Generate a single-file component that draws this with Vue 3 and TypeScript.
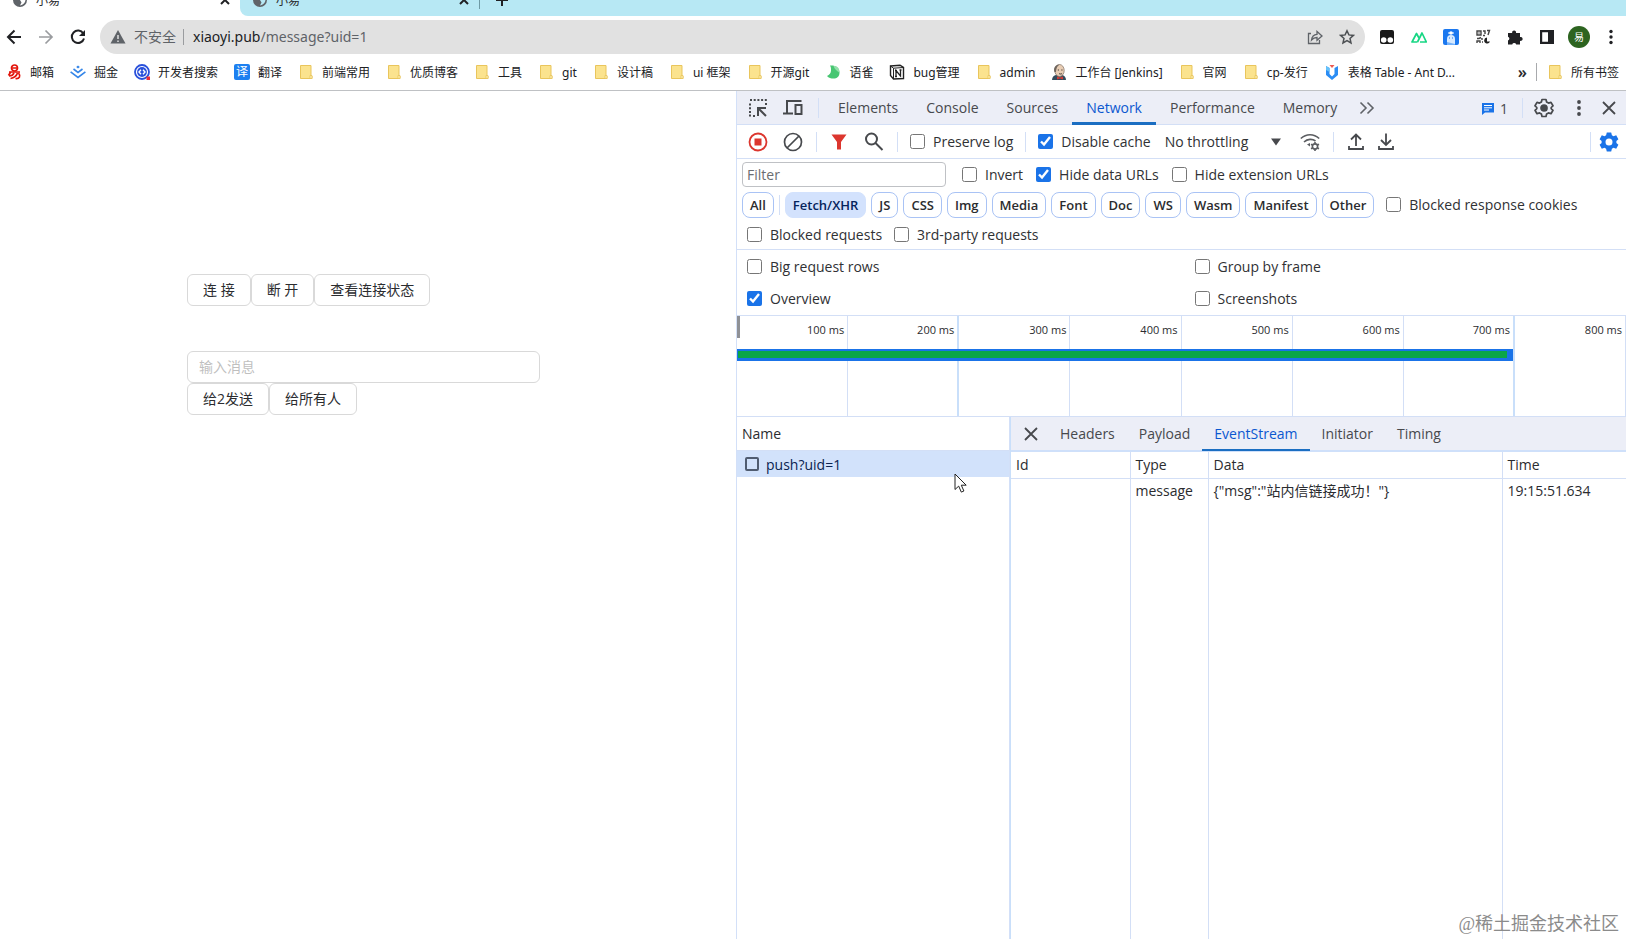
<script setup lang="ts">
import { ref } from 'vue'

interface Bookmark {
  label: string
  icon: string
}

const bookmarks: Bookmark[] = [
  { label: '邮箱', icon: 'netease' },
  { label: '掘金', icon: 'juejin' },
  { label: '开发者搜索', icon: 'search' },
  { label: '翻译', icon: 'translate' },
  { label: '前端常用', icon: 'folder' },
  { label: '优质博客', icon: 'folder' },
  { label: '工具', icon: 'folder' },
  { label: 'git', icon: 'folder' },
  { label: '设计稿', icon: 'folder' },
  { label: 'ui 框架', icon: 'folder' },
  { label: '开源git', icon: 'folder' },
  { label: '语雀', icon: 'yuque' },
  { label: 'bug管理', icon: 'notion' },
  { label: 'admin', icon: 'folder' },
  { label: '工作台 [Jenkins]', icon: 'jenkins' },
  { label: '官网', icon: 'folder' },
  { label: 'cp-发行', icon: 'folder' },
  { label: '表格 Table - Ant D...', icon: 'antd' },
]

const panels = ['Elements', 'Console', 'Sources', 'Network', 'Performance', 'Memory']
const activePanel = ref('Network')

const types = ['Fetch/XHR', 'JS', 'CSS', 'Img', 'Media', 'Font', 'Doc', 'WS', 'Wasm', 'Manifest', 'Other']
const activeType = ref('Fetch/XHR')

const ticks = [100, 200, 300, 400, 500, 600, 700, 800]

const detailTabs = ['Headers', 'Payload', 'EventStream', 'Initiator', 'Timing']
const activeDetail = ref('EventStream')

const preserveLog = ref(false)
const disableCache = ref(true)
const invert = ref(false)
const hideData = ref(true)
const hideExtension = ref(false)
const blockedCookies = ref(false)
const blockedRequests = ref(false)
const thirdParty = ref(false)
const bigRows = ref(false)
const groupByFrame = ref(false)
const overview = ref(true)
const screenshots = ref(false)
const filterText = ref('')
const message = ref('')
const throttling = ref('No throttling')
</script>

<template>
  <div class="browser">
    <div class="tabstrip">
      <div class="tab current">
        <svg class="globe" viewBox="0 0 16 16"><circle cx="8" cy="8" r="7" fill="#5f6368" /><path d="M8 2.500c3 0 5 2 5.500 5 0 3-2 5.500-5.500 6l1.500-3L8 8z" fill="#fff" /></svg>
        <span class="tab-title">小易</span>
        <button class="tab-close" aria-label="Close tab"><svg viewBox="0 0 10 10"><path d="M1 1l8 8M9 1l-8 8" /></svg></button>
      </div>
      <div class="tab">
        <svg class="globe" viewBox="0 0 16 16"><circle cx="8" cy="8" r="7" fill="#5f6368" /><path d="M8 2.500c3 0 5 2 5.500 5 0 3-2 5.500-5.500 6l1.500-3L8 8z" fill="#b7e8f4" /></svg>
        <span class="tab-title">小易</span>
        <button class="tab-close" aria-label="Close tab"><svg viewBox="0 0 10 10"><path d="M1 1l8 8M9 1l-8 8" /></svg></button>
      </div>
      <button class="new-tab" aria-label="New tab"><svg viewBox="0 0 12 12"><path d="M6 0v12M0 6h12" /></svg></button>
    </div>

    <div class="toolbar">
      <button class="nav" aria-label="Back"><svg viewBox="0 0 16 16" fill="none" stroke="#202124" stroke-width="2"><path d="M15 8H2M8.500 1.500L2 8l6.500 6.500" /></svg></button>
      <button class="nav" aria-label="Forward"><svg viewBox="0 0 16 16" fill="none" stroke="#9a9c9f" stroke-width="1.700"><path d="M1 8h13M7.500 1.500L14 8l-6.500 6.500" /></svg></button>
      <button class="nav" aria-label="Reload"><svg viewBox="0 0 16 16" fill="none" stroke="#202124" stroke-width="2"><path d="M13.300 4.500A6.200 6.200 0 1 0 14 9.500" /><path d="M15 1v6H9z" fill="#202124" stroke="none" /></svg></button>
      <div class="omnibox">
        <svg class="warn" viewBox="0 0 16 16"><path d="M8 1l7.500 13.500H.5z" fill="#5f6368" /><path d="M8 6v4M8 11.500v1.500" stroke="#e1e1e1" stroke-width="1.500" /></svg>
        <span class="insecure">不安全</span>
        <span class="omni-sep"></span>
        <span class="url">xiaoyi.pub<span class="path">/message?uid=1</span></span>
        <button class="omni-btn" aria-label="Share"><svg viewBox="0 0 16 16" fill="none" stroke="#5f6368" stroke-width="1.300"><path d="M4 4.500H1.500v10h11V11" /><path d="M4.500 11c.4-3.800 2.500-5.500 5.500-5.700V2.500l5 4.500-5 4.300V8.500c-2.500 0-4 .7-5.500 2.500z" /></svg></button>
        <button class="omni-btn" aria-label="Bookmark this tab"><svg viewBox="0 0 16 16" fill="none" stroke="#4d5053" stroke-width="1.500"><path d="M8 1.800l1.900 4.100 4.500.5-3.400 3 1 4.500L8 11.600l-4 2.300 1-4.500-3.400-3 4.500-.5z" /></svg></button>
      </div>
      <div class="extensions">
        <button class="ext" aria-label="Tampermonkey"><svg viewBox="0 0 16 16"><rect x="1" y="1" width="14" height="14" rx="2" fill="#191919" /><circle cx="4.700" cy="11" r="2.800" fill="#fff" /><circle cx="11.300" cy="11" r="2.800" fill="#fff" /></svg></button>
        <button class="ext" aria-label="Nuxt"><svg viewBox="0 0 16 16" fill="none" stroke="#17d684" stroke-width="1.700" stroke-linejoin="round"><path d="M6.500 13H1L5.500 4.500 8 9" /><path d="M6.500 13L11 4l4.300 9H9" /></svg></button>
        <button class="ext" aria-label="Assistant"><svg viewBox="0 0 16 16"><rect width="16" height="16" rx="2" fill="#1b78ef" /><path d="M4 16V10a4 4 0 0 1 8 0v6z" fill="#d7eaff" /><circle cx="8" cy="4" r="1.800" fill="#fff" /><path d="M5 4h6" stroke="#fff" /><path d="M4 13l8 2v1H4z" fill="#75b2fa" /><path d="M6 9h1M9 9h1" stroke="#1b78ef" /></svg></button>
        <button class="ext" aria-label="QR code"><svg viewBox="0 0 16 16" fill="none" stroke="#444" stroke-width="1.400"><path d="M2 2h4v4H2zM8 2h2v3M12 1.500h2.500L13 6M8 6.500h2M2 9.500h2l2-1M2 14v-2h3v2M7 9v2M7 13h1" /><path d="M12 8.500a3 3 0 1 0 3 4h-3z" fill="#222" stroke="none" /><path d="M3.500 4h1" /></svg></button>
        <button class="ext" aria-label="Extensions"><svg viewBox="0 0 16 16" fill="#202124"><path d="M1 4h4.200a2 2 0 1 1 3.800 0h4v4a2 2 0 1 1 0 3.800V15.500H9.200a2.100 2.100 0 0 0-4 0H1v-4a2 2 0 0 0 0-3.800z" /></svg></button>
        <button class="ext" aria-label="Side panel"><svg viewBox="0 0 16 16"><path d="M1 1h14v14H1zM3.200 3.200v9.600H9V3.200z" fill="#202124" fill-rule="evenodd" /></svg></button>
        <button class="avatar" aria-label="Profile">易</button>
        <button class="ext" aria-label="Menu"><svg viewBox="0 0 16 16" fill="#202124"><circle cx="8" cy="2.500" r="1.700" /><circle cx="8" cy="8" r="1.700" /><circle cx="8" cy="13.500" r="1.700" /></svg></button>
      </div>
    </div>

    <nav class="bookmarks">
      <a v-for="b in bookmarks" :key="b.label" href="#" class="bookmark">
        <svg v-if="b.icon === 'folder'" viewBox="0 0 16 16"><path d="M2.500 1.500h10.500v10.500h1v2.500H2.500z" fill="#fbe38e" stroke="#e9c55c" /><path d="M12 14.500v-3h2v3z" fill="#fff0b8" stroke="#e9c55c" stroke-width=".8" /></svg>
        <svg v-else-if="b.icon === 'netease'" viewBox="0 0 16 16" fill="none" stroke="#e3150b" stroke-width="1.700"><circle cx="8.500" cy="4" r="3" /><path d="M6 4h5M3 8h11M5 7.500l-2.500 4M8 9c-1 2.500-3 3-5 3M11.500 9c-1 3-4 5-7 5.500M12.500 9c2.500 3 1 6-3 5.500" /></svg>
        <svg v-else-if="b.icon === 'juejin'" viewBox="0 0 16 16" fill="none" stroke="#3586e8" stroke-width="1.600"><path d="M8 1.500l1.800 1.600L8 4.600 6.200 3.100z" fill="#3586e8" stroke="none" /><path d="M3.500 5L8 8.400 12.500 5M.6 7.800L8 13.500l7.400-5.700" /></svg>
        <svg v-else-if="b.icon === 'search'" viewBox="0 0 16 16"><circle cx="8" cy="8" r="7" fill="#fff" stroke="#2950db" stroke-width="1.800" /><circle cx="8" cy="8" r="4.900" fill="#2950db" /><path d="M7 5.700L5 8l2 2.300M9 5.700L11 8l-2 2.300" stroke="#fff" stroke-width="1.400" fill="none" /><rect x="12.500" y="12.500" width="3.500" height="3.500" fill="#ed2d36" /></svg>
        <span v-else-if="b.icon === 'translate'" class="yi">译</span>
        <svg v-else-if="b.icon === 'yuque'" viewBox="0 0 16 16"><path d="M5 1.500c5-.5 9.500 2 9.500 7 0 4-2.500 6-6 6-2.500 0-5-.5-6.500-2.500C4.500 11 6 9 6 6.500 6 4.500 6 3 5 1.500z" fill="#47c672" /><path d="M8.500 1.700c4 0 6.500 3 5.800 7-1.800-2-4.800-3-5.800-7z" fill="#93dfaa" /></svg>
        <svg v-else-if="b.icon === 'notion'" viewBox="0 0 16 16"><path d="M1.500 2L11 1.200 14.500 3.500v11l-10 .5-3-3.500z" fill="#fff" stroke="#222" stroke-width="1.400" /><path d="M1.500 2l3 2.200 10-.7M4.500 4.200V15" fill="none" stroke="#222" /><path d="M7 12.500v-6l4.500 5.500V6M6 6.500h2M10.500 6h2M6 12.500h2" fill="none" stroke="#222" stroke-width="1.300" /></svg>
        <svg v-else-if="b.icon === 'jenkins'" viewBox="0 0 16 16"><path d="M1 16c0-3 2-4.500 4-5h6c2 .5 4 2 4 5z" fill="#334b5c" /><ellipse cx="8.500" cy="6.500" rx="4.700" ry="6" fill="#e8cdb4" stroke="#8b7b70" stroke-width=".8" /><path d="M3.500 8C2 4 4.500.5 9 .5 6 2 5.500 4 5 8z" fill="#6f665f" /><path d="M6.800 6h1.200M10.300 6h1.200M8 9.500c1 .7 2 .7 3 0" stroke="#413632" fill="none" /><path d="M6 12.500l3 1 3-1v3l-3-1-3 1z" fill="#cf3b36" /></svg>
        <svg v-else viewBox="0 0 16 16"><path d="M2 2l3.500 2v6L8 12.500 10.500 10V4L14 2v9l-6 5-6-5z" fill="#2b8df4" /><path d="M2 2l3.500 2v4L2 6z" fill="#65c2fa" /><path d="M5.500 1h5L8 4z" fill="#ed5a52" /></svg>
        <span>{{ b.label }}</span>
      </a>
      <button class="more" aria-label="More bookmarks">»</button>
      <a href="#" class="bookmark all">
        <svg viewBox="0 0 16 16"><path d="M2.500 1.500h10.500v10.500h1v2.500H2.500z" fill="#fbe38e" stroke="#e9c55c" /><path d="M12 14.500v-3h2v3z" fill="#fff0b8" stroke="#e9c55c" stroke-width=".8" /></svg>
        <span>所有书签</span>
      </a>
    </nav>

    <div class="content">
      <main class="page">
        <div class="btn-row">
          <button class="btn">连 接</button><button class="btn">断 开</button><button class="btn">查看连接状态</button>
        </div>
        <input v-model="message" class="msg" type="text" placeholder="输入消息" aria-label="输入消息" />
        <div class="btn-row">
          <button class="btn">给2发送</button><button class="btn">给所有人</button>
        </div>
      </main>

      <section class="devtools">
        <div class="panel-bar">
          <button class="icon-btn" aria-label="Inspect"><svg viewBox="0 0 20 20" fill="none" stroke="#47494d" stroke-width="2"><path d="M2 2h17" stroke-dasharray="2 1.700" /><path d="M2 5.500V19M18 5v3" stroke-dasharray="2 1.700" /><path d="M5 18h3" stroke-dasharray="2 1.500" /><path d="M10 18V10h8M10.500 10.500L18 18" /></svg></button>
          <button class="icon-btn" aria-label="Device toolbar"><svg viewBox="0 0 20 20" fill="none" stroke="#47494d" stroke-width="2"><path d="M18.500 3H4v12M0 15.500h10" /><path d="M12.500 7h6v9h-6z" /></svg></button>
          <span class="sep"></span>
          <div class="panel-tabs" role="tablist">
            <button v-for="p in panels" :key="p" role="tab" class="panel-tab" :class="{ active: activePanel === p }" @click="activePanel = p">{{ p }}</button>
          </div>
          <button class="chev" aria-label="More tabs"><svg viewBox="0 0 16 16" fill="none" stroke="#5f6368" stroke-width="1.600"><path d="M1.500 2.500L7 8l-5.500 5.500M8.500 2.500L14 8l-5.500 5.500" /></svg></button>
          <button class="issues"><svg viewBox="0 0 14 14"><path d="M1 1h12v9.500H4L1 13z" fill="#1a73e8" /><path d="M3 3.500h8M3 5.800h8M3 8h5" stroke="#fff" /></svg><span>1</span></button>
          <span class="sep"></span>
          <button class="icon-btn" aria-label="Settings"><svg viewBox="0 0 20 20" fill="none" stroke="#47494d" stroke-width="1.700" stroke-linejoin="round"><path d="M8 1.500h4l.6 2.500 1.900 1.100L17 4.400l2 3.400L17.200 9.500v1.200L19 12.300l-2 3.400-2.500-.8-1.900 1.100-.6 2.500H8L7.400 16l-1.900-1.100-2.500.8-2-3.400 1.800-1.600V9.500L1 7.800l2-3.400 2.500.7L7.400 4z" /><circle cx="10" cy="10" r="3" fill="#47494d" /></svg></button>
          <button class="icon-btn dots" aria-label="More options"><svg viewBox="0 0 20 20" fill="#47494d"><circle cx="10" cy="4" r="1.900" /><circle cx="10" cy="10" r="1.900" /><circle cx="10" cy="16" r="1.900" /></svg></button>
          <button class="icon-btn close" aria-label="Close"><svg viewBox="0 0 20 20" fill="none" stroke="#47494d" stroke-width="1.800"><path d="M4 4l12 12M16 4L4 16" /></svg></button>
        </div>

        <div class="net-bar">
          <button class="icon-btn" aria-label="Record"><svg viewBox="0 0 20 20"><circle cx="10" cy="10" r="8.500" fill="none" stroke="#dc362e" stroke-width="1.800" /><rect x="6.500" y="6.500" width="7" height="7" fill="#dc362e" /></svg></button>
          <button class="icon-btn" aria-label="Clear"><svg viewBox="0 0 20 20" fill="none" stroke="#47494d" stroke-width="1.700"><circle cx="10" cy="10" r="8.500" /><path d="M16 4L4 16" /></svg></button>
          <span class="sep"></span>
          <button class="icon-btn" aria-label="Filter"><svg viewBox="0 0 20 20"><path d="M2.500 2.500h15L12 10v7.500H8V10z" fill="#dc362e" /></svg></button>
          <button class="icon-btn" aria-label="Search"><svg viewBox="0 0 20 20" fill="none" stroke="#47494d" stroke-width="2"><circle cx="7.500" cy="7" r="5.500" /><path d="M11.500 11l7 7" /></svg></button>
          <span class="sep"></span>
          <label class="check log"><input v-model="preserveLog" type="checkbox" />Preserve log</label>
          <span class="sep"></span>
          <label class="check cache"><input v-model="disableCache" type="checkbox" />Disable cache</label>
          <div class="throttle">
            <select v-model="throttling" aria-label="Throttling"><option>No throttling</option></select>
            <svg viewBox="0 0 10 8"><path d="M0 .5h10L5 7.500z" fill="#47494d" /></svg>
          </div>
          <button class="icon-btn" aria-label="Network conditions"><svg viewBox="0 0 20 20" fill="none" stroke="#5b5d61" stroke-width="1.600"><path d="M.8 6.500c5.500-5 13-5 18.400 0M4 10c3.500-3.300 8.500-3.300 11.500-1" /><path d="M7 12.500l3-1.500v3.500z" fill="#5b5d61" stroke="none" /><circle cx="15" cy="14.500" r="2.600" /><path d="M15 10v1.500M15 17.500V19M11 12.300l1.500.8M17.500 16l1.500.8M11 16.800l1.500-.8M17.500 13l1.500-.8" /></svg></button>
          <span class="sep"></span>
          <button class="icon-btn" aria-label="Import"><svg viewBox="0 0 20 20" fill="none" stroke="#47494d" stroke-width="1.800"><path d="M10 14V3M5 7.500L10 2.500l5 5M3 14v3h14v-3" /></svg></button>
          <button class="icon-btn" aria-label="Export"><svg viewBox="0 0 20 20" fill="none" stroke="#47494d" stroke-width="1.800"><path d="M10 1.500v11M5 8l5 5 5-5M3 14v3h14v-3" /></svg></button>
          <span class="sep last"></span>
          <button class="icon-btn gear" aria-label="Network settings"><svg viewBox="0 0 20 20"><path d="M7.800.5h4.400l.7 2.700 1.600 1 2.700-.9 2.200 3.900-2 1.900v1.800l2 1.900-2.200 3.900-2.700-.9-1.600 1-.7 2.700H7.800l-.7-2.700-1.600-1-2.700.9-2.200-3.900 2-1.900V9.100l-2-1.900 2.200-3.900 2.700.9 1.600-1zM10 6.500a3.500 3.500 0 1 0 0 7 3.500 3.500 0 0 0 0-7z" fill="#1a73e8" fill-rule="evenodd" /></svg></button>
        </div>

        <div class="filters">
          <div class="filter-row">
            <input v-model="filterText" class="filter" type="text" placeholder="Filter" aria-label="Filter" />
            <label class="check"><input v-model="invert" type="checkbox" />Invert</label>
            <label class="check"><input v-model="hideData" type="checkbox" />Hide data URLs</label>
            <label class="check"><input v-model="hideExtension" type="checkbox" />Hide extension URLs</label>
          </div>
          <div class="chip-row">
            <button class="chip" :class="{ active: activeType === 'All' }" @click="activeType = 'All'">All</button>
            <span class="chip-sep"></span>
            <button v-for="t in types" :key="t" class="chip" :class="{ active: activeType === t }" @click="activeType = t">{{ t }}</button>
            <label class="check cookies"><input v-model="blockedCookies" type="checkbox" />Blocked response cookies</label>
          </div>
          <div class="blocked-row">
            <label class="check"><input v-model="blockedRequests" type="checkbox" />Blocked requests</label>
            <label class="check"><input v-model="thirdParty" type="checkbox" />3rd-party requests</label>
          </div>
        </div>

        <div class="settings">
          <label class="check"><input v-model="bigRows" type="checkbox" />Big request rows</label>
          <label class="check"><input v-model="groupByFrame" type="checkbox" />Group by frame</label>
          <label class="check"><input v-model="overview" type="checkbox" />Overview</label>
          <label class="check"><input v-model="screenshots" type="checkbox" />Screenshots</label>
        </div>

        <div class="timeline">
          <div v-for="t in ticks" :key="t" class="tick" :class="{ strong: t === 200 || t === 700 }">{{ t }} ms</div>
          <span class="handle"></span>
          <span class="load"></span>
        </div>

        <div class="split">
          <div class="requests">
            <div class="name-head">Name</div>
            <button class="request"><span class="file"></span>push?uid=1</button>
            <svg class="cursor" viewBox="0 0 13 20"><path d="M1 1v15.500l3.700-3.400 2.600 6 2.600-1.100-2.600-5.800h4.900z" fill="#fff" stroke="#222" /></svg>
          </div>
          <div class="detail">
            <div class="detail-tabs" role="tablist">
              <button class="detail-close" aria-label="Close details"><svg viewBox="0 0 14 14" fill="none" stroke="#47494d" stroke-width="1.800"><path d="M1 1l12 12M13 1L1 13" /></svg></button>
              <button v-for="d in detailTabs" :key="d" role="tab" class="detail-tab" :class="{ active: activeDetail === d }" @click="activeDetail = d">{{ d }}</button>
            </div>
            <table class="events">
              <colgroup><col class="c-id" /><col class="c-type" /><col class="c-data" /><col class="c-time" /></colgroup>
              <thead>
                <tr><th>Id</th><th>Type</th><th>Data</th><th>Time</th></tr>
              </thead>
              <tbody>
                <tr><td></td><td>message</td><td>{"msg":"站内信链接成功！"}</td><td>19:15:51.634</td></tr>
                <tr class="filler"><td></td><td></td><td></td><td></td></tr>
              </tbody>
            </table>
          </div>
        </div>
      </section>
    </div>
    <div class="watermark">@稀土掘金技术社区</div>
  </div>
</template>

<style>
body {
  margin: 0;
}
</style>

<style scoped>
* {
  box-sizing: border-box;
}
.browser {
  position: relative;
  display: flex;
  flex-direction: column;
  height: 100vh;
  overflow: hidden;
  background: #fff;
  color: #2b2c2f;
  font-family: 'Open Sans', 'Noto Sans CJK SC', sans-serif;
  font-size: 14px;
}
button {
  margin: 0;
  padding: 0;
  border: 0;
  background: none;
  color: inherit;
  font: inherit;
}
svg {
  display: block;
  flex: none;
}
.tabstrip {
  display: flex;
  align-items: flex-end;
  flex: none;
  height: 16px;
  overflow: hidden;
  background: #fff;
}
.tab {
  display: flex;
  align-items: center;
  flex: none;
  width: 239px;
  height: 32px;
  padding: 0 10px 0 12px;
  background: #b7e8f4;
  font-size: 12px;
  border-bottom-left-radius: 8px;
}
.tab.current {
  width: 240px;
  background: #fff;
}
.globe {
  width: 16px;
  height: 16px;
}
.tab-title {
  flex: 1;
  margin-left: 8px;
}
.tab-close svg {
  width: 10px;
  height: 10px;
  stroke: #202124;
  stroke-width: 2;
}
.new-tab {
  display: flex;
  align-items: center;
  flex: 1;
  height: 32px;
  padding-left: 16px;
  background: #b7e8f4;
}
.new-tab::before {
  content: '';
  width: 1px;
  height: 18px;
  margin: 0 16px 0 -16px;
  background: #6e9aa5;
}
.new-tab svg {
  width: 12px;
  height: 12px;
  stroke: #202124;
  stroke-width: 2;
}
.toolbar {
  display: flex;
  align-items: center;
  flex: none;
  height: 42px;
  padding-left: 6px;
}
.nav {
  width: 16px;
  margin-right: 16px;
}
.nav:nth-child(3) {
  margin-right: 14px;
}
.nav svg,
.ext svg,
.omni-btn svg {
  width: 16px;
  height: 16px;
}
.omnibox {
  display: flex;
  align-items: center;
  flex: 1;
  height: 34px;
  padding: 0 10px;
  border-radius: 17px;
  background: #e1e1e1;
}
.warn {
  width: 16px;
  height: 16px;
}
.insecure {
  margin-left: 8px;
  padding-bottom: 2px;
  color: #5f6368;
}
.omni-sep {
  width: 1px;
  height: 16px;
  margin: 0 9px 0 7px;
  background: #9a9c9f;
}
.url {
  flex: 1;
  padding-bottom: 2px;
  color: #202124;
  font-family: 'Noto Sans', sans-serif;
}
.path {
  color: #5f6368;
}
.omni-btn {
  margin-left: 16px;
}
.extensions {
  display: flex;
  align-items: center;
  gap: 16px;
  padding: 0 7px 0 14px;
}
.avatar {
  width: 22px;
  height: 22px;
  margin: 0 -3px;
  border-radius: 50%;
  background: #2d6420;
  color: #fff;
  font-size: 10px;
  line-height: 22px;
}
.bookmarks {
  display: flex;
  align-items: center;
  gap: 16px;
  flex: none;
  height: 33px;
  padding: 0 7px 4px 6px;
  border-bottom: 1px solid #bfc1c4;
  font-family: 'Noto Sans', 'Noto Sans CJK SC', sans-serif;
  font-size: 12px;
  white-space: nowrap;
}
.bookmark {
  display: flex;
  align-items: center;
  gap: 8px;
  color: #202124;
  text-decoration: none;
}
.bookmark svg {
  width: 16px;
  height: 16px;
}
.yi {
  width: 16px;
  height: 16px;
  border-radius: 2px;
  background: #1d80f0;
  color: #fff;
  line-height: 15px;
  text-align: center;
}
.more {
  margin-left: auto;
  font-size: 16px;
  font-weight: 600;
}
.all {
  margin-left: -7px;
  padding-left: 10px;
  border-left: 1px solid #a8aaad;
}
.content {
  display: grid;
  grid-template-columns: 736fr 890fr;
  flex: 1;
  min-height: 0;
}
.page {
  min-width: 0;
  padding: 183px 0 0 187px;
}
.btn-row {
  display: flex;
}
.btn {
  height: 32px;
  padding: 0 15px 2px;
  border: 1px solid #d9d9d9;
  border-radius: 6px;
  background: #fff;
}
.msg {
  display: block;
  width: 353px;
  max-width: 100%;
  height: 32px;
  margin-top: 45px;
  padding: 0 11px 2px;
  border: 1px solid #d9d9d9;
  border-radius: 6px;
  font: inherit;
}
.msg::placeholder {
  color: #bfbfbf;
}
.devtools {
  display: flex;
  flex-direction: column;
  min-width: 0;
  border-left: 1px solid #d3e0f8;
  white-space: nowrap;
}
.panel-bar,
.net-bar {
  display: flex;
  align-items: center;
  flex: none;
  height: 34px;
  padding: 0 7px 0 11px;
  border-bottom: 1px solid #d3dff6;
}
.panel-bar {
  background: #eceef7;
  color: #47494d;
}
.icon-btn {
  flex: none;
  width: 20px;
  margin-right: 15px;
}
.icon-btn svg {
  width: 20px;
  height: 20px;
}
.sep {
  flex: none;
  width: 1px;
  height: 20px;
  margin-right: 12px;
  background: #d3dff6;
}
.net-bar .sep {
  margin-left: -2px;
}
.panel-bar .sep {
  margin-right: 5px;
}
.panel-tabs {
  display: flex;
  align-self: stretch;
}
.panel-tab {
  height: 34px;
  padding: 2px 14px 0;
  border-bottom: 3px solid transparent;
}
.panel-tab.active,
.detail-tab.active {
  border-bottom-color: #1b6ec2;
  color: #0b57d0;
}
.chev {
  margin-left: 8px;
}
.chev svg {
  width: 16px;
  height: 16px;
}
.issues {
  display: flex;
  align-items: center;
  gap: 5px;
  margin: 2px 14px 0 auto;
}
.issues svg {
  width: 14px;
  height: 14px;
}
.panel-bar .dots {
  margin-right: 10px;
}
.panel-bar .close {
  margin-right: 0;
}
.panel-bar .sep + .icon-btn {
  margin-left: 6px;
}
.check {
  display: flex;
  align-items: center;
  gap: 8px;
  color: #303134;
}
.check input {
  width: 15px;
  height: 15px;
  margin: 0;
  accent-color: #1a73e8;
}
.log {
  margin-right: 14px;
}
.cache {
  margin-right: 14px;
}
.throttle {
  display: flex;
  align-items: center;
  width: 116px;
  margin-right: 19px;
}
.throttle select {
  flex: 1;
  min-width: 0;
  padding: 0;
  border: 0;
  background: none;
  color: #303134;
  font: inherit;
  appearance: none;
}
.throttle svg {
  width: 10px;
  height: 8px;
}
.net-bar .icon-btn[aria-label='Import'] {
  margin-right: 10px;
}
.net-bar .last {
  margin-left: auto;
  margin-right: 8px;
}
.net-bar .gear {
  margin-right: 0;
}
.filters {
  flex: none;
  padding: 2px 5px;
  border-bottom: 1px solid #d3dff6;
}
.filter-row,
.chip-row,
.blocked-row {
  display: flex;
  align-items: center;
  height: 30px;
}
.filter-row {
  gap: 13px;
  height: 27px;
}
.filter {
  width: 204px;
  height: 25px;
  margin-right: 3px;
  padding: 0 4px 1px;
  border: 1px solid #bfc1c5;
  border-radius: 4px;
  font: inherit;
}
.filter::placeholder {
  color: #6b6d71;
}
.chip-row {
  gap: 5px;
  height: 33px;
}
.chip {
  height: 26px;
  padding: 0 7px;
  border: 1px solid #a9c3f5;
  border-radius: 8px;
  font-size: 13px;
  font-weight: 600;
}
.chip.active {
  border-color: #d3e2fd;
  background: #d3e2fd;
  color: #06245c;
}
.chip-sep {
  width: 1px;
  height: 20px;
  background: #d3dff6;
}
.cookies {
  margin-left: 7px;
}
.blocked-row {
  gap: 12px;
  height: 26px;
  padding-left: 5px;
}
.settings {
  display: grid;
  grid-template-columns: 1fr 1fr;
  column-gap: 16px;
  flex: none;
  padding: 0 0 1px 10px;
  border-bottom: 1px solid #d3dff6;
}
.settings .check {
  height: 32px;
}
.timeline {
  position: relative;
  display: grid;
  grid-template-columns: repeat(8, 1fr);
  flex: none;
  height: 101px;
  border-bottom: 1px solid #d3dff6;
}
.tick {
  padding: 5px 3px 0 0;
  border-right: 1px solid #d3dff6;
  font-size: 11px;
  line-height: 18px;
  text-align: right;
}
.tick.strong {
  border-right: 2px solid #c9dffa;
}
.handle {
  position: absolute;
  top: 0;
  left: 0;
  width: 3px;
  height: 22px;
  background: #8f9196;
}
.load {
  position: absolute;
  top: 33px;
  left: 0;
  width: calc(87.5% - 2px);
  height: 12px;
  border: solid #1a73e8;
  border-width: 2px 6px 3px 1px;
  background: #0aa648;
}
.split {
  display: grid;
  grid-template-columns: 273fr 616fr;
  flex: 1;
  min-height: 0;
}
.requests {
  position: relative;
  border-right: 1px solid #d3e0f8;
}
.name-head {
  height: 34px;
  padding-left: 5px;
  border-bottom: 1px solid #d3dff6;
  line-height: 33px;
}
.request {
  display: flex;
  align-items: center;
  width: 100%;
  height: 26px;
  padding-left: 8px;
  background: #d2e2fb;
  color: #0a2350;
}
.file {
  width: 14px;
  height: 14px;
  margin-right: 7px;
  border: 2px solid #505c70;
  border-radius: 2px;
}
.cursor {
  position: absolute;
  top: 56px;
  left: 217px;
  width: 13px;
  height: 20px;
}
.detail {
  display: flex;
  flex-direction: column;
  min-width: 0;
  border-left: 1px solid #c9dffa;
}
.detail-tabs {
  display: flex;
  flex: none;
  height: 35px;
  border-bottom: 2px solid #cfe0fa;
  background: #eceef7;
  color: #47494d;
}
.detail-close {
  padding: 0 10px 0 13px;
}
.detail-close svg {
  width: 14px;
  height: 14px;
}
.detail-tab {
  height: 34px;
  padding: 0 12px;
  border-bottom: 2px solid transparent;
}
.events {
  flex: 1;
  width: 100%;
  table-layout: fixed;
  border-collapse: collapse;
}
.c-id {
  width: 119px;
}
.c-type {
  width: 78px;
}
.c-time {
  width: 124px;
}
.events th,
.events td {
  height: 26px;
  padding: 0 5px;
  border-left: 1px solid #d3dff6;
  font-weight: 400;
  line-height: 24px;
  text-align: left;
}
.events th:first-child,
.events td:first-child {
  border-left: 0;
}
.events th {
  border-bottom: 1px solid #d3dff6;
}
.events .filler td {
  height: 100%;
}
.watermark {
  position: absolute;
  right: 7px;
  bottom: 4px;
  color: #8b8b8b;
  font-family: 'Liberation Serif', 'Noto Sans CJK SC', serif;
  font-size: 18px;
}
</style>
